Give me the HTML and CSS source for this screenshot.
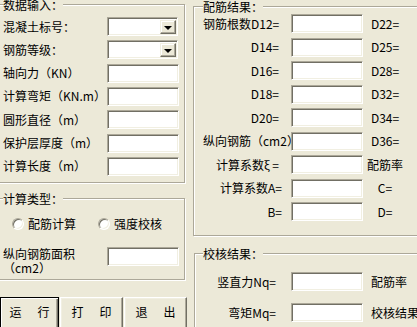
FILE: index.html
```html
<!DOCTYPE html>
<html lang="zh-CN">
<head>
<meta charset="utf-8">
<title>配筋计算</title>
<link rel="stylesheet" href="styles.css">
</head>
<body>
<div class="app">
  <div class="col-left">
    <fieldset class="group group-data">
      <legend>数据输入：</legend>
      <div class="form-rows">
        <div class="row"><label>混凝土标号：</label><div class="combo"><span class="combo-btn"><span class="tri"></span></span></div></div>
        <div class="row"><label>钢筋等级：</label><div class="combo"><span class="combo-btn"><span class="tri"></span></span></div></div>
        <div class="row"><label>轴向力（KN）</label><input class="field" type="text"></div>
        <div class="row"><label>计算弯矩（KN.m）</label><input class="field" type="text"></div>
        <div class="row"><label>圆形直径（m）</label><input class="field" type="text"></div>
        <div class="row"><label>保护层厚度（m）</label><input class="field" type="text"></div>
        <div class="row"><label>计算长度（m）</label><input class="field" type="text"></div>
      </div>
    </fieldset>
    <fieldset class="group group-type">
      <legend>计算类型：</legend>
      <div class="radios">
        <label class="radio"><span class="radio-dot"></span>配筋计算</label>
        <label class="radio"><span class="radio-dot"></span>强度校核</label>
      </div>
      <div class="row-area">
        <label><span class="line">纵向钢筋面积</span><span class="line">（cm2）</span></label><input class="field" type="text">
      </div>
    </fieldset>
    <div class="buttons">
      <button class="btn btn-default"><span>运</span><span>行</span></button>
      <button class="btn"><span>打</span><span>印</span></button>
      <button class="btn"><span>退</span><span>出</span></button>
    </div>
  </div>
  <div class="col-right">
    <fieldset class="group group-result">
      <legend>配筋结果：</legend>
      <div class="result-grid">
        <span class="lbl">钢筋根数D12=</span><input class="field" type="text"><span class="rlbl">D22=</span>
        <span class="lbl">D14=</span><input class="field" type="text"><span class="rlbl">D25=</span>
        <span class="lbl">D16=</span><input class="field" type="text"><span class="rlbl">D28=</span>
        <span class="lbl">D18=</span><input class="field" type="text"><span class="rlbl">D32=</span>
        <span class="lbl">D20=</span><input class="field" type="text"><span class="rlbl">D34=</span>
        <span class="lbl lbl-left">纵向钢筋（cm2）</span><input class="field" type="text"><span class="rlbl">D36=</span>
        <span class="lbl">计算系数ξ =</span><input class="field" type="text"><span class="rlbl">配筋率</span>
        <span class="lbl lbl-wide">计算系数A=</span><input class="field" type="text"><span class="rlbl">C=</span>
        <span class="lbl lbl-wide">B=</span><input class="field" type="text"><span class="rlbl">D=</span>
      </div>
    </fieldset>
    <fieldset class="group group-check">
      <legend>校核结果：</legend>
      <div class="check-grid">
        <span class="lbl">竖直力Nq=</span><input class="field" type="text"><span class="rlbl">配筋率</span>
        <span class="lbl">弯矩Mq=</span><input class="field" type="text"><span class="rlbl">校核结果</span>
      </div>
    </fieldset>
  </div>
</div>
</body>
</html>
```

FILE: styles.css
```css
* { box-sizing: border-box; }
html, body { margin: 0; padding: 0; }
body {
  width: 417px;
  height: 327px;
  overflow: hidden;
  background: #ece9d8;
  color: #000;
  font: 12px/14px "Noto Sans CJK SC", "Noto Sans", sans-serif;
}

.app {
  display: flex;
  align-items: flex-start;
  column-gap: 8px;
  margin: -2px 0 0 -4px;
}
.col-left {
  flex: none;
  width: 189px;
  display: flex;
  flex-direction: column;
}
.col-right {
  flex: none;
  width: 240px;
  margin-top: 2px;
  display: flex;
  flex-direction: column;
}

/* etched group boxes */
.group {
  margin: 0;
  padding: 0;
  min-width: 0;
  border: 1px solid #aca899;
  box-shadow: inset 1px 1px 0 #fff, 1px 1px 0 #fff;
}
.group legend {
  padding: 0;
  margin-left: 6px;
  line-height: 13px;
  background: #ece9d8;
  white-space: nowrap;
}

/* sunken text fields */
.field, .combo {
  width: 72px;
  height: 19px;
  margin: 0;
  padding: 0;
  background: #fff;
  border: 1px solid;
  border-color: #aca899 #fff #fff #aca899;
  box-shadow: inset 1px 1px 0 #716f64, inset -1px -1px 0 #f1efe2;
  font: inherit;
  outline: none;
}
.combo {
  width: 71px;
  display: flex;
  justify-content: flex-end;
  align-items: stretch;
  padding: 2px 1px 1px 2px;
}
.combo-btn {
  width: 16px;
  background: #ece9d8;
  border: 1px solid;
  border-color: #f1efe2 #716f64 #716f64 #f1efe2;
  box-shadow: inset -1px -1px 0 #aca899, inset 1px 1px 0 #fff;
  display: flex;
  align-items: center;
  justify-content: center;
}
.tri {
  width: 0;
  height: 0;
  border-left: 4px solid transparent;
  border-right: 4px solid transparent;
  border-top: 4px solid #000;
  margin-top: 1px;
}

/* data group */
.group-data { height: 185px; }
.group-data legend { margin-left: 6px; }
.form-rows {
  display: flex;
  flex-direction: column;
  gap: 4.33px;
  padding: 6px 0 0 6px;
}
.row {
  display: flex;
  align-items: center;
  height: 19px;
}
.row label {
  flex: none;
  width: 104px;
  white-space: nowrap;
}

/* type group */
.group-type {
  margin-top: 9px;
  height: 88px;
}
.group-type legend { margin-left: 6px; }
.radios {
  display: flex;
  padding: 12px 0 0 15px;
}
.radio {
  display: flex;
  align-items: center;
  gap: 4px;
  width: 96px;
  height: 14px;
  white-space: nowrap;
}
.radio-dot {
  flex: none;
  width: 12px;
  height: 12px;
  border-radius: 50%;
  background: #fff;
  border: 1px solid;
  border-color: #aca899 #fff #fff #aca899;
  box-shadow: inset 1px 1px 0 #716f64, inset -1px -1px 0 #f1efe2;
}
.row-area {
  display: flex;
  align-items: flex-start;
  margin-top: 16px;
  padding-left: 6px;
}
.row-area label {
  flex: none;
  width: 104px;
  display: flex;
  flex-direction: column;
  white-space: nowrap;
}
.row-area .line {
  display: block;
  height: 14px;
  line-height: 14px;
}

/* buttons */
.buttons {
  display: flex;
  gap: 1px;
  margin-top: 17px;
  padding-left: 4px;
}
.btn {
  flex: none;
  width: 63px;
  height: 34px;
  margin: 0;
  padding: 7px 0 0 0;
  display: flex;
  justify-content: center;
  align-items: flex-start;
  gap: 16px;
  font: inherit;
  line-height: 14px;
  white-space: nowrap;
  color: #000;
  background: #ece9d8;
  border: 1px solid;
  border-color: #fff #716f64 #716f64 #fff;
  box-shadow: inset -1px -1px 0 #aca899, inset 1px 1px 0 #f1efe2;
}
.btn-default {
  width: 59px;
  border-color: #000;
  box-shadow: inset 1px 1px 0 #fff, inset -1px -1px 0 #716f64, inset -2px -2px 0 #aca899;
}

/* result group */
.group-result { height: 236px; }
.group-result legend { margin-left: 9px; }
.result-grid {
  display: grid;
  grid-template-columns: 88px 72px 44px;
  grid-auto-rows: 19px;
  row-gap: 4.5px;
  align-items: center;
  padding: 1px 0 0 9px;
}
.lbl {
  text-align: right;
  padding-right: 12px;
  white-space: nowrap;
}
.lbl-wide { padding-right: 9px; }
.lbl-left {
  text-align: left;
  padding-right: 0;
}
.rlbl {
  text-align: center;
  white-space: nowrap;
}

/* check group */
.group-check {
  margin: 11px 0 0 1px;
  height: 100px;
}
.group-check legend { margin-left: 8px; }
.check-grid {
  display: grid;
  grid-template-columns: 88px 72px 60px;
  grid-auto-rows: 19px;
  row-gap: 12px;
  align-items: center;
  padding: 12px 0 0 8px;
}
.check-grid .lbl { padding-right: 15px; }
.check-grid .rlbl {
  text-align: left;
  padding-left: 8px;
}
```
